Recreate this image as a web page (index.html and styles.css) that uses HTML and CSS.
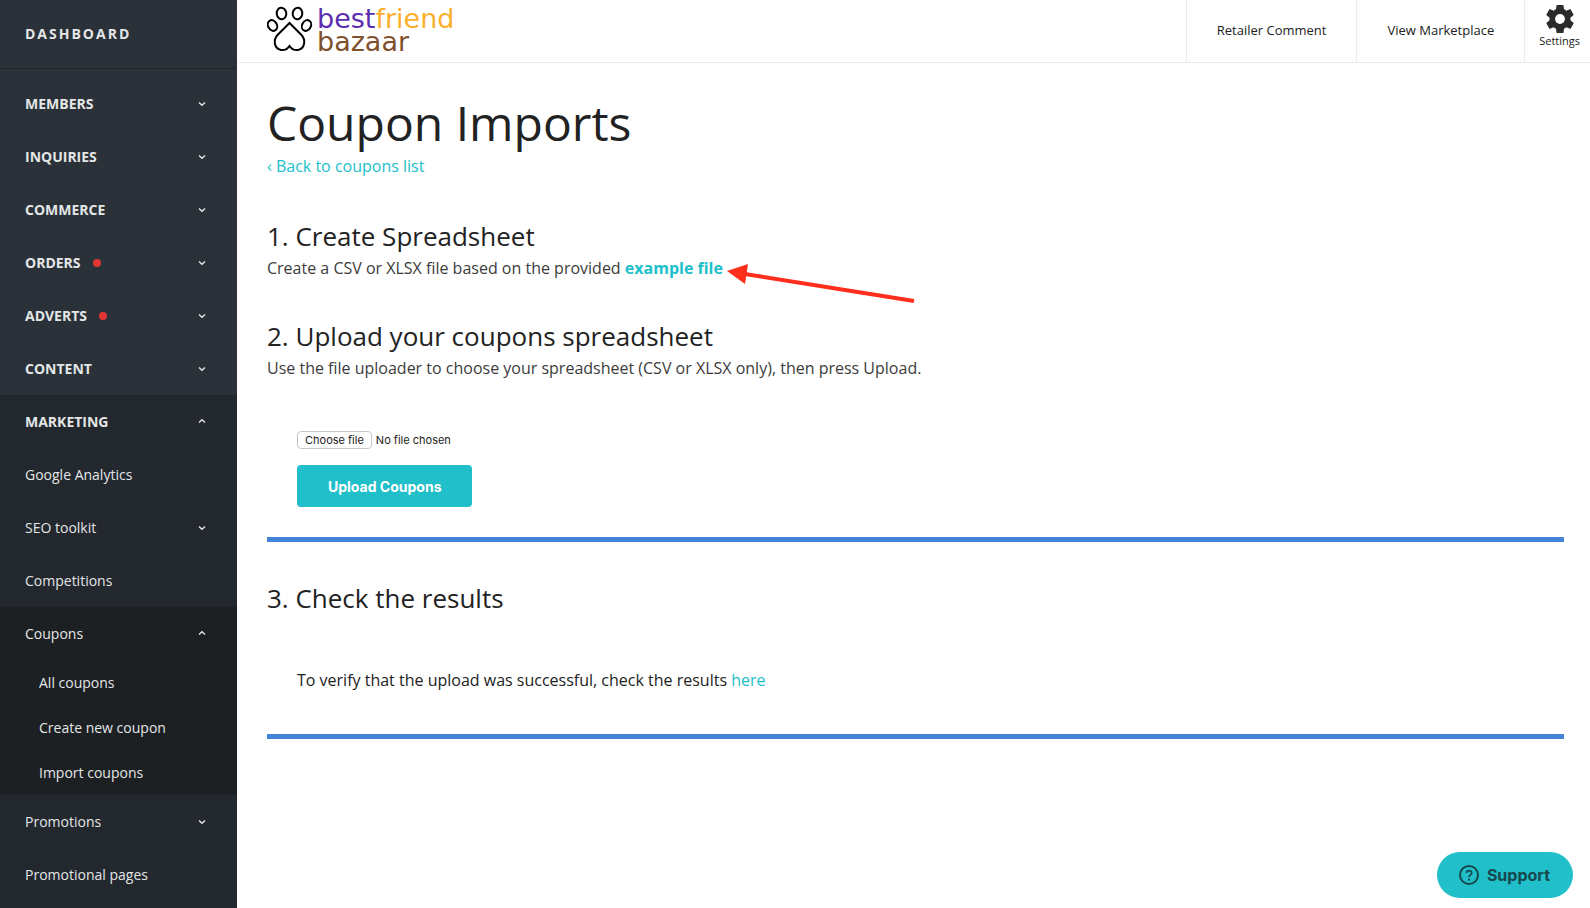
FILE: index.html
```html
<!DOCTYPE html>
<html lang="en">

<head>
  <meta charset="UTF-8">
  <meta name="viewport" content="width=device-width, initial-scale=1">
  <title>Coupon Imports</title>
  <link rel="stylesheet" href="styles.css">
</head>

<body>
  <!-- chevrons shared by the menu -->
  <svg class="sprite" aria-hidden="true">
    <symbol id="down" viewBox="0 0 8 8">
      <path d="M1 2.5L4 5.3L7 2.5" fill="none" stroke="currentColor" stroke-width="1.4" />
    </symbol>
    <symbol id="up" viewBox="0 0 8 8">
      <path d="M1 4.5L4 1.7L7 4.5" fill="none" stroke="currentColor" stroke-width="1.4" />
    </symbol>
  </svg>

  <nav class="sidebar">
    <a class="sidebar-title" href="#">DASHBOARD</a>
    <ul class="menu">
      <li><a class="top" href="#">MEMBERS <svg class="chevron"><use href="#down" /></svg></a></li>
      <li><a class="top" href="#">INQUIRIES <svg class="chevron"><use href="#down" /></svg></a></li>
      <li><a class="top" href="#">COMMERCE <svg class="chevron"><use href="#down" /></svg></a></li>
      <li><a class="top" href="#">ORDERS <span class="dot"></span><svg class="chevron"><use href="#down" /></svg></a></li>
      <li><a class="top" href="#">ADVERTS <span class="dot"></span><svg class="chevron"><use href="#down" /></svg></a></li>
      <li><a class="top" href="#">CONTENT <svg class="chevron"><use href="#down" /></svg></a></li>
      <li class="open">
        <a class="top" href="#">MARKETING <svg class="chevron"><use href="#up" /></svg></a>
        <ul>
          <li><a href="#">Google Analytics</a></li>
          <li><a href="#">SEO toolkit <svg class="chevron"><use href="#down" /></svg></a></li>
          <li><a href="#">Competitions</a></li>
          <li class="open-sub">
            <a href="#">Coupons <svg class="chevron"><use href="#up" /></svg></a>
            <ul class="submenu">
              <li><a href="#">All coupons</a></li>
              <li><a href="#">Create new coupon</a></li>
              <li><a href="#">Import coupons</a></li>
            </ul>
          </li>
          <li><a href="#">Promotions <svg class="chevron"><use href="#down" /></svg></a></li>
          <li><a href="#">Promotional pages</a></li>
        </ul>
      </li>
    </ul>
  </nav>

  <div class="page">
    <header class="topbar">
      <a class="logo" href="#">
        <svg class="paw" viewBox="0 0 46 46" fill="none" stroke="#000" stroke-width="2">
          <ellipse cx="14.500" cy="7.500" rx="4.800" ry="5.800" transform="rotate(-8 14.500 7.500)" />
          <ellipse cx="30.500" cy="7.500" rx="4.800" ry="5.800" transform="rotate(8 30.500 7.500)" />
          <ellipse cx="5.500" cy="19.500" rx="4.400" ry="5.600" transform="rotate(-28 5.500 19.500)" />
          <ellipse cx="39.500" cy="19.500" rx="4.400" ry="5.600" transform="rotate(28 39.500 19.500)" />
          <path d="M22.500 17L10.500 29C6 34 7 42.500 14 44C18 44.500 20.500 43 22.500 40C24.500 43 27 44.500 31 44C38 42.500 39 34 34.500 29Z" />
        </svg>
        <span class="logo-text">
          <span><span class="best">best</span><span class="friend">friend</span></span>
          <span class="bazaar">bazaar</span>
        </span>
      </a>
      <div class="topbar-links">
        <a href="#">Retailer Comment</a>
        <a href="#">View Marketplace</a>
        <a class="settings" href="#">
          <svg class="gear" viewBox="2 2 20 20"><path fill="#2b2b2b" d="M19.430 12.980c.040-.320.070-.640.070-.980s-.030-.660-.070-.980l2.110-1.650c.190-.150.240-.420.120-.640l-2-3.460c-.120-.220-.390-.300-.610-.220l-2.490 1c-.520-.400-1.080-.730-1.690-.980l-.380-2.650C14.460 2.180 14.250 2 14 2h-4c-.250 0-.460.180-.490.420l-.380 2.650c-.610.250-1.170.590-1.690.980l-2.490-1c-.230-.090-.490 0-.610.220l-2 3.460c-.130.220-.070.490.120.640l2.110 1.650c-.040.320-.070.650-.070.980s.030.660.070.980l-2.110 1.650c-.190.150-.240.420-.120.640l2 3.460c.120.220.390.300.610.220l2.490-1c.520.400 1.080.730 1.690.980l.380 2.650c.030.240.240.420.490.420h4c.250 0 .460-.180.490-.420l.380-2.650c.610-.250 1.170-.590 1.690-.980l2.490 1c.230.090.490 0 .610-.220l2-3.460c.120-.220.070-.490-.120-.640l-2.110-1.650zM12 15.500c-1.930 0-3.500-1.570-3.500-3.500s1.570-3.500 3.500-3.500 3.500 1.570 3.500 3.500-1.570 3.500-3.500 3.500z" /></svg>
          Settings
        </a>
      </div>
    </header>

    <main>
      <h1>Coupon Imports</h1>
      <a class="back" href="#">‹ Back to coupons list</a>

      <section>
        <h2>1. Create Spreadsheet</h2>
        <p>Create a CSV or XLSX file based on the provided
          <span class="pointed"><a class="example" href="#">example file</a><svg class="arrow" viewBox="0 0 188 42">
            <path d="M18 11L187 38" stroke="#ff2d1c" stroke-width="4" />
            <path d="M0 8L21 1L18 21Z" fill="#ff2d1c" />
          </svg></span>
        </p>
      </section>

      <section>
        <h2>2. Upload your coupons spreadsheet</h2>
        <p>Use the file uploader to choose your spreadsheet (CSV or XLSX only), then press Upload.</p>
        <form class="box">
          <div class="file-row">
            <input type="file" id="coupons-file">
            <label class="file-button" for="coupons-file">Choose file</label>
            <span>No file chosen</span>
          </div>
          <button class="upload" type="button">Upload Coupons</button>
        </form>
      </section>

      <section>
        <h2>3. Check the results</h2>
        <div class="box results">To verify that the upload was successful, check the results <a href="#">here</a></div>
      </section>
    </main>
  </div>

  <button class="support" type="button">
    <svg viewBox="0 0 20 20" fill="none" stroke="currentColor" stroke-width="2">
      <circle cx="10" cy="10" r="9" />
      <path d="M7.300 8C7.300 4.700 12.700 4.700 12.700 8C12.700 9.800 10 10 10 12.200" stroke-width="1.700" />
      <path d="M10 13.800V15.600" />
    </svg>
    Support
  </button>
</body>

</html>
```

FILE: styles.css
```css
* {
  box-sizing: border-box;
}

body {
  margin: 0;
  display: flex;
  min-height: 100vh;
  font-family: "Open Sans", "Noto Sans", sans-serif;
  font-size: 16px;
  line-height: 24px;
  color: #222;
  background: #fff;
}

a {
  color: #21bfca;
  text-decoration: none;
}

ul {
  list-style: none;
  margin: 0;
  padding: 0;
}

.sprite {
  position: absolute;
  width: 0;
  height: 0;
}

/* sidebar */
.sidebar {
  flex: 0 0 237px;
  height: 100vh;
  overflow: hidden;
  background: #2a3138;
}

.sidebar a {
  display: flex;
  align-items: center;
  height: 53px;
  padding: 0 31px 0 25px;
  font-size: 14px;
  color: #e4e6e7;
}

.sidebar .sidebar-title {
  height: 69px;
  border-bottom: 1px solid #1f252b;
  font-weight: 700;
  letter-spacing: 2px;
}

.menu {
  padding-top: 8px;
}

.sidebar .top {
  font-weight: 700;
}

.sidebar .submenu a {
  height: 45px;
  padding-left: 39px;
}

.open {
  padding-bottom: 8px;
  background: #22282e;
}

.open-sub {
  background: #1c2023;
}

.chevron {
  width: 8px;
  height: 8px;
  margin-left: auto;
}

.dot {
  width: 8px;
  height: 8px;
  margin-left: 12px;
  border-radius: 50%;
  background: #e03535;
}

/* top bar */
.page {
  flex: 1;
  min-width: 0;
}

.topbar {
  display: flex;
  justify-content: space-between;
  height: 63px;
  border-bottom: 1px solid #ebebeb;
}

.logo {
  display: flex;
  gap: 4px;
  padding: 6px 0 0 30px;
}

.paw {
  width: 46px;
  height: 46px;
}

.logo-text {
  display: flex;
  flex-direction: column;
  padding-top: 1px;
  font-family: "DejaVu Sans", sans-serif;
  font-size: 27px;
  line-height: 23px;
  font-variant-ligatures: none;
}

.best {
  color: #5b2eb0;
}

.friend {
  color: #fbb02d;
}

.bazaar {
  color: #80502c;
}

.topbar-links {
  display: flex;
}

.topbar-links a {
  display: flex;
  align-items: center;
  padding: 0 30px 2px;
  border-left: 1px solid #ebebeb;
  font-size: 13px;
  color: #222;
}

.topbar-links .settings {
  flex-direction: column;
  padding: 5px 10px 0 14px;
  font-size: 11px;
  line-height: 16px;
}

.gear {
  width: 28px;
  height: 28px;
}

/* content */
main {
  padding: 30px 26px 30px 30px;
}

h1 {
  margin: 0;
  font-size: 48px;
  font-weight: 400;
  line-height: 59px;
}

.back {
  display: block;
  width: max-content;
  line-height: 28px;
}

section {
  margin-top: 36px;
}

h2 {
  margin: 0;
  font-size: 26px;
  font-weight: 400;
  line-height: 40px;
}

p {
  margin: 0;
  color: #3c3c3c;
}

.example {
  font-weight: 700;
}

.pointed {
  position: relative;
}

.arrow {
  position: absolute;
  left: 100%;
  top: 6px;
  width: 188px;
  height: 42px;
  margin-left: 4px;
}

.box {
  padding: 51px 30px 30px;
  border-bottom: 5px solid #4384d8;
}

.results {
  padding: 50px 30px 42px;
}

.file-row {
  position: relative;
  display: flex;
  align-items: center;
  gap: 4px;
  width: max-content;
  margin-bottom: 16px;
  font-family: Inter, sans-serif;
  font-size: 11px;
  line-height: 16px;
}

.file-row input {
  position: absolute;
  inset: 0;
  width: 100%;
  opacity: 0;
}

.file-button {
  padding: 0 7px;
  border: 1px solid #c4c4c4;
  border-radius: 4px;
}

.upload {
  display: block;
  height: 42px;
  padding: 0 31px;
  border: 0;
  border-radius: 4px;
  background: #21bfca;
  font-family: Inter, sans-serif;
  font-size: 14px;
  font-weight: 700;
  color: #fff;
}

.support {
  position: fixed;
  right: 17px;
  bottom: 10px;
  display: flex;
  align-items: center;
  gap: 8px;
  height: 46px;
  padding: 0 23px 0 22px;
  border: 0;
  border-radius: 23px;
  background: #21bfca;
  font-family: Inter, sans-serif;
  font-size: 16px;
  font-weight: 700;
  color: #17484c;
}

.support svg {
  width: 20px;
  height: 20px;
}
```
